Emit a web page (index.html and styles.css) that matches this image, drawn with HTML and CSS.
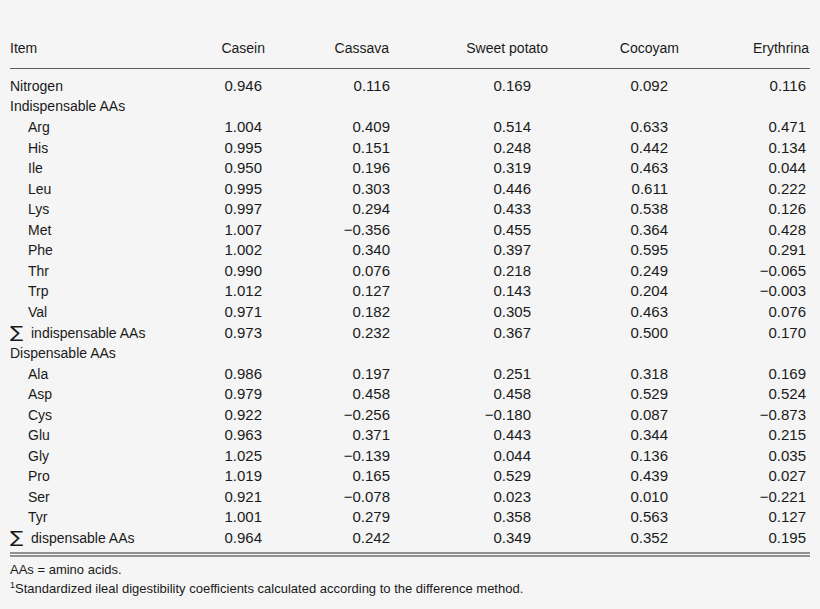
FILE: index.html
```html
<!DOCTYPE html>
<html>
<head>
<meta charset="utf-8">
<link rel="stylesheet" href="styles.css">
</head>
<body>
<div class="table">
  <div class="head">
    <div class="item">Item</div>
    <div class="hc">Casein</div>
    <div class="hc">Cassava</div>
    <div class="hc">Sweet potato</div>
    <div class="hc">Cocoyam</div>
    <div class="hc">Erythrina</div>
  </div>
  <div class="body">
    <div class="row"><div class="item">Nitrogen</div><div class="n">0.946</div><div class="n">0.116</div><div class="n">0.169</div><div class="n">0.092</div><div class="n">0.116</div></div>
    <div class="row"><div class="item">Indispensable AAs</div></div>
    <div class="row"><div class="item sub">Arg</div><div class="n">1.004</div><div class="n">0.409</div><div class="n">0.514</div><div class="n">0.633</div><div class="n">0.471</div></div>
    <div class="row"><div class="item sub">His</div><div class="n">0.995</div><div class="n">0.151</div><div class="n">0.248</div><div class="n">0.442</div><div class="n">0.134</div></div>
    <div class="row"><div class="item sub">Ile</div><div class="n">0.950</div><div class="n">0.196</div><div class="n">0.319</div><div class="n">0.463</div><div class="n">0.044</div></div>
    <div class="row"><div class="item sub">Leu</div><div class="n">0.995</div><div class="n">0.303</div><div class="n">0.446</div><div class="n">0.611</div><div class="n">0.222</div></div>
    <div class="row"><div class="item sub">Lys</div><div class="n">0.997</div><div class="n">0.294</div><div class="n">0.433</div><div class="n">0.538</div><div class="n">0.126</div></div>
    <div class="row"><div class="item sub">Met</div><div class="n">1.007</div><div class="n">−0.356</div><div class="n">0.455</div><div class="n">0.364</div><div class="n">0.428</div></div>
    <div class="row"><div class="item sub">Phe</div><div class="n">1.002</div><div class="n">0.340</div><div class="n">0.397</div><div class="n">0.595</div><div class="n">0.291</div></div>
    <div class="row"><div class="item sub">Thr</div><div class="n">0.990</div><div class="n">0.076</div><div class="n">0.218</div><div class="n">0.249</div><div class="n">−0.065</div></div>
    <div class="row"><div class="item sub">Trp</div><div class="n">1.012</div><div class="n">0.127</div><div class="n">0.143</div><div class="n">0.204</div><div class="n">−0.003</div></div>
    <div class="row"><div class="item sub">Val</div><div class="n">0.971</div><div class="n">0.182</div><div class="n">0.305</div><div class="n">0.463</div><div class="n">0.076</div></div>
    <div class="row"><div class="item"><span class="sigma">∑</span>indispensable AAs</div><div class="n">0.973</div><div class="n">0.232</div><div class="n">0.367</div><div class="n">0.500</div><div class="n">0.170</div></div>
    <div class="row"><div class="item">Dispensable AAs</div></div>
    <div class="row"><div class="item sub">Ala</div><div class="n">0.986</div><div class="n">0.197</div><div class="n">0.251</div><div class="n">0.318</div><div class="n">0.169</div></div>
    <div class="row"><div class="item sub">Asp</div><div class="n">0.979</div><div class="n">0.458</div><div class="n">0.458</div><div class="n">0.529</div><div class="n">0.524</div></div>
    <div class="row"><div class="item sub">Cys</div><div class="n">0.922</div><div class="n">−0.256</div><div class="n">−0.180</div><div class="n">0.087</div><div class="n">−0.873</div></div>
    <div class="row"><div class="item sub">Glu</div><div class="n">0.963</div><div class="n">0.371</div><div class="n">0.443</div><div class="n">0.344</div><div class="n">0.215</div></div>
    <div class="row"><div class="item sub">Gly</div><div class="n">1.025</div><div class="n">−0.139</div><div class="n">0.044</div><div class="n">0.136</div><div class="n">0.035</div></div>
    <div class="row"><div class="item sub">Pro</div><div class="n">1.019</div><div class="n">0.165</div><div class="n">0.529</div><div class="n">0.439</div><div class="n">0.027</div></div>
    <div class="row"><div class="item sub">Ser</div><div class="n">0.921</div><div class="n">−0.078</div><div class="n">0.023</div><div class="n">0.010</div><div class="n">−0.221</div></div>
    <div class="row"><div class="item sub">Tyr</div><div class="n">1.001</div><div class="n">0.279</div><div class="n">0.358</div><div class="n">0.563</div><div class="n">0.127</div></div>
    <div class="row"><div class="item"><span class="sigma">∑</span>dispensable AAs</div><div class="n">0.964</div><div class="n">0.242</div><div class="n">0.349</div><div class="n">0.352</div><div class="n">0.195</div></div>
  </div>
  <div class="notes">
    <p>AAs = amino acids.</p>
    <p><sup>1</sup>Standardized ileal digestibility coefficients calculated according to the difference method.</p>
  </div>
</div>
</body>
</html>
```

FILE: styles.css
```css
html, body {
  margin: 0;
  padding: 0;
  background: #f5f5f5;
}
body {
  font-family: "Liberation Sans", Arial, sans-serif;
  color: #1a1a1a;
  width: 820px;
  height: 609px;
  overflow: hidden;
}
.table {
  padding: 0 10px;
}
.head {
  display: grid;
  grid-template-columns: 190px 65px 124px 159px 131px 130px 1px;
  padding-top: 37.6px;
  padding-bottom: 10px;
  border-bottom: 1px solid #5e5e5e;
  font-size: 14px;
  line-height: 20.55px;
}
.hc {
  text-align: right;
}
.body {
  padding-top: 6.8px;
  padding-bottom: 3.4px;
  border-bottom: 5px double #909090;
}
.row {
  display: grid;
  grid-template-columns: 190px 62px 128px 141px 137px 138px 4px;
  height: 20.55px;
  line-height: 20.55px;
}
.item {
  font-size: 14px;
  white-space: nowrap;
}
.item.sub {
  padding-left: 18px;
}
.sigma {
  display: inline-block;
  width: 15px;
  margin-right: 6px;
  font-family: "DejaVu Sans", sans-serif;
  font-size: 17px;
  line-height: 0;
  transform: scaleX(1.15);
  transform-origin: left center;
}
.n {
  font-size: 15px;
  text-align: right;
  white-space: nowrap;
}
.notes {
  padding-top: 4.3px;
  font-size: 13px;
  line-height: 18.3px;
}
.notes p {
  margin: 0;
}
.notes sup {
  font-size: 9px;
  line-height: 0;
  vertical-align: 5px;
}
```
